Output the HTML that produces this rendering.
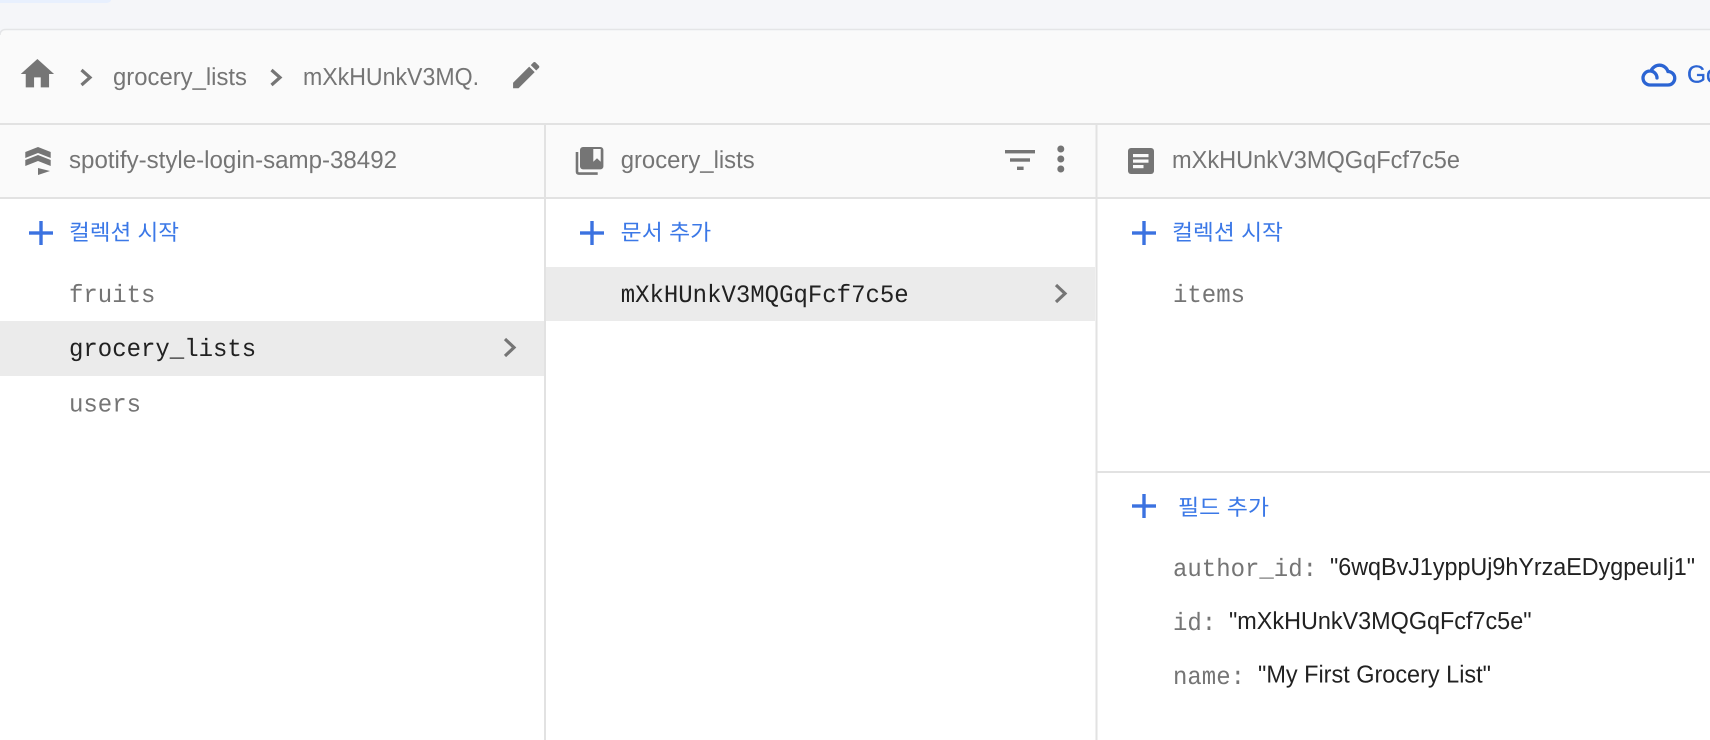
<!DOCTYPE html>
<html lang="ko">
<head>
<meta charset="utf-8">
<title>Firestore</title>
<style>
html,body{margin:0;padding:0;width:1710px;height:740px;overflow:hidden;background:#fff}
svg{display:block;position:absolute;left:0;top:0}
text{text-rendering:geometricPrecision;white-space:pre}
.s{font-family:"Liberation Sans",sans-serif;font-size:24.5px;fill:#757575}
.m{font-family:"Liberation Mono",monospace;font-size:25px;fill:#757575}
.k{fill:#212121}
.v{font-family:"Liberation Sans",sans-serif;font-size:24.5px;fill:#212121}
.b{font-family:"Liberation Sans","Noto Sans CJK KR",sans-serif;font-size:22px;fill:#3b78e7}
.i{fill:#757575}
.c{fill:none;stroke:#757575;stroke-width:3.2}
.p{fill:#3b72e0}
</style>
</head>
<body>
<svg width="1710" height="740" viewBox="0 0 1710 740" xmlns="http://www.w3.org/2000/svg">
  <!-- page background -->
  <rect width="1710" height="740" fill="#f5f6f9"/>
  <path d="M0 0H111V0C111 2 108 3 105 3H0Z" fill="#e8f0fe"/>
  <!-- card -->
  <path d="M0 35Q0 30 6 30H1710V740H0Z" fill="#ffffff"/>
  <path d="M0 35Q0 30 6 30H1710V124H0Z" fill="#fafafa"/>
  <path d="M0 35Q0 29.5 6 29.5H1710" fill="none" stroke="#e4e5e7" stroke-width="1.4"/>
  <rect x="0" y="125" width="1710" height="72" fill="#fafafa"/>
  <!-- selected rows -->
  <rect x="0" y="321" width="544" height="55" fill="#ebebeb"/>
  <rect x="546" y="267" width="549" height="54" fill="#ebebeb"/>
  <!-- divider lines -->
  <rect x="0" y="123" width="1710" height="2" fill="#e2e2e2"/>
  <rect x="0" y="197" width="1710" height="2" fill="#e2e2e2"/>
  <rect x="544" y="124" width="2" height="616" fill="#e2e2e2"/>
  <rect x="1095.5" y="124" width="2" height="616" fill="#e2e2e2"/>
  <rect x="1097" y="471" width="613" height="2" fill="#e2e2e2"/>

  <!-- breadcrumb -->
  <svg x="17.4" y="54" width="40" height="40" viewBox="0 0 24 24"><path class="i" d="M10 20v-6h4v6h5v-8h3L12 3 2 12h3v8z"/></svg>
  <polyline class="c" points="81.5,70 90,77.5 81.5,85"/>
  <text class="s" x="113" y="85" textLength="134" lengthAdjust="spacingAndGlyphs">grocery_lists</text>
  <polyline class="c" points="271.5,70 280,77.5 271.5,85"/>
  <text class="s" x="303" y="85" textLength="176" lengthAdjust="spacingAndGlyphs">mXkHUnkV3MQ.</text>
  <svg x="508.7" y="57.6" width="35" height="35" viewBox="0 0 24 24"><path class="i" d="M3 17.25V21h3.75L17.81 9.94l-3.75-3.75L3 17.25zM20.71 7.04c.39-.39.39-1.02 0-1.41l-2.34-2.34c-.39-.39-1.02-.39-1.41 0l-1.83 1.83 3.75 3.75 1.83-1.83z"/></svg>
  <path d="M1668 85H1650A7 7 0 0 1 1650 71A7 7 0 0 1 1657 78M1651 71A9 9 0 0 1 1668 71.5A6.75 6.75 0 0 1 1668 85" fill="none" stroke="#2b64d3" stroke-width="3.3" stroke-linecap="round"/>
  <text x="1687" y="82.7" font-family="Liberation Sans, sans-serif" font-size="24.5" fill="#2b64d3" stroke="#2b64d3" stroke-width=".3">Go</text>

  <!-- column 1 header -->
  <polygon class="i" points="25.3,152 38,147 50.7,152 50.7,158 38,153 25.3,158"/>
  <polygon class="i" points="25.3,160 38,155 50.7,160 50.7,166 38,161 25.3,166"/>
  <polygon class="i" points="38,168 50,171 38,175"/>
  <text class="s" x="69" y="168" textLength="328" lengthAdjust="spacingAndGlyphs">spotify-style-login-samp-38492</text>

  <!-- column 2 header -->
  <rect class="i" x="580" y="147" width="23.4" height="22.4" rx="3"/>
  <polygon points="593.3,149 600.7,149 600.7,161.7 597,158.3 593.3,161.7" fill="#fafafa"/>
  <path d="M577 152V171.5Q577 173.6 579 173.6H597.7" fill="none" stroke="#757575" stroke-width="2.6"/>
  <text class="s" x="620.7" y="168" textLength="134" lengthAdjust="spacingAndGlyphs">grocery_lists</text>
  <rect class="i" x="1005" y="150" width="30" height="3.4"/>
  <rect class="i" x="1010" y="158.3" width="20" height="3.4"/>
  <rect class="i" x="1017" y="166.6" width="6.6" height="3.4"/>
  <circle class="i" cx="1060.8" cy="149" r="3.5"/>
  <circle class="i" cx="1060.8" cy="159" r="3.5"/>
  <circle class="i" cx="1060.8" cy="169" r="3.5"/>

  <!-- column 3 header -->
  <rect class="i" x="1128" y="148" width="26" height="26" rx="3"/>
  <rect x="1133" y="154" width="15.5" height="3.2" fill="#fafafa"/>
  <rect x="1133" y="159.5" width="15.5" height="3.2" fill="#fafafa"/>
  <rect x="1133" y="165" width="10.5" height="3.2" fill="#fafafa"/>
  <text class="s" x="1172" y="168" textLength="288" lengthAdjust="spacingAndGlyphs">mXkHUnkV3MQGqFcf7c5e</text>

  <!-- add rows -->
  <rect class="p" x="29" y="231.3" width="24" height="3.4"/><rect class="p" x="39.3" y="221" width="3.4" height="24"/>
  <text class="b" x="69" y="240" textLength="110" lengthAdjust="spacingAndGlyphs">컬렉션 시작</text>
  <rect class="p" x="580" y="231.3" width="24" height="3.4"/><rect class="p" x="590.3" y="221" width="3.4" height="24"/>
  <text class="b" x="620.7" y="240" textLength="90.5" lengthAdjust="spacingAndGlyphs">문서 추가</text>
  <rect class="p" x="1132" y="231.3" width="24" height="3.4"/><rect class="p" x="1142.3" y="221" width="3.4" height="24"/>
  <text class="b" x="1172" y="240" textLength="111" lengthAdjust="spacingAndGlyphs">컬렉션 시작</text>

  <!-- column 1 list -->
  <text class="m" x="69" y="302" textLength="86.4" lengthAdjust="spacingAndGlyphs">fruits</text>
  <text class="m k" x="69" y="356" textLength="187.2" lengthAdjust="spacingAndGlyphs">grocery_lists</text>
  <text class="m" x="69" y="411.5" textLength="72" lengthAdjust="spacingAndGlyphs">users</text>
  <polyline class="c" points="505,339 514,347.5 505,356"/>

  <!-- column 2 list -->
  <text class="m k" x="620.7" y="302" textLength="288" lengthAdjust="spacingAndGlyphs">mXkHUnkV3MQGqFcf7c5e</text>
  <polyline class="c" points="1056,285 1065,293.5 1056,302"/>

  <!-- column 3 list -->
  <text class="m" x="1173" y="302" textLength="72" lengthAdjust="spacingAndGlyphs">items</text>

  <!-- fields -->
  <rect class="p" x="1132" y="504.3" width="24" height="3.4"/><rect class="p" x="1142.3" y="494" width="3.4" height="24"/>
  <text class="b" x="1178" y="515" textLength="91" lengthAdjust="spacingAndGlyphs">필드 추가</text>

  <text class="m" x="1173" y="576" textLength="144" lengthAdjust="spacingAndGlyphs">author_id:</text>
  <text class="v" x="1330" y="575" textLength="365" lengthAdjust="spacingAndGlyphs">"6wqBvJ1yppUj9hYrzaEDygpeuIj1"</text>
  <text class="m" x="1173" y="630" textLength="43.2" lengthAdjust="spacingAndGlyphs">id:</text>
  <text class="v" x="1229" y="629" textLength="302.5" lengthAdjust="spacingAndGlyphs">"mXkHUnkV3MQGqFcf7c5e"</text>
  <text class="m" x="1173" y="684" textLength="72" lengthAdjust="spacingAndGlyphs">name:</text>
  <text class="v" x="1258" y="682.7" textLength="233" lengthAdjust="spacingAndGlyphs">"My First Grocery List"</text>
</svg>
</body>
</html>
